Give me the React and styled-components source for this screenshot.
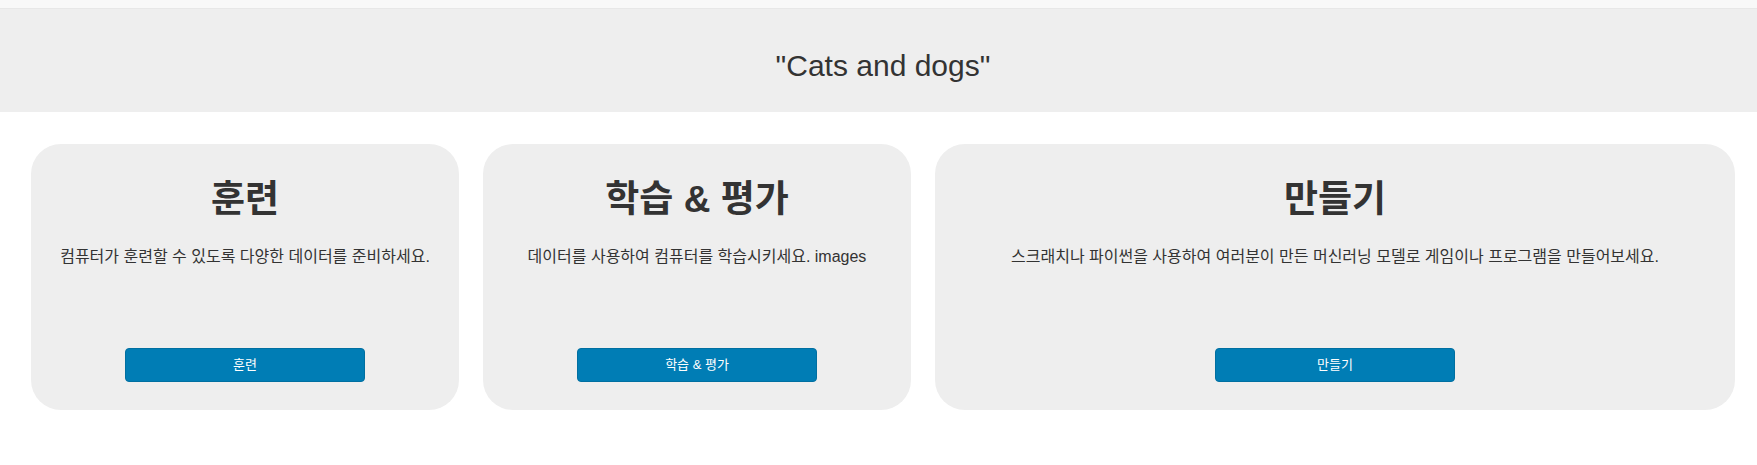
import React from 'react';
import styled, { createGlobalStyle } from 'styled-components';

const Global = createGlobalStyle`
  * { box-sizing: border-box; }
  body {
    margin: 0;
    background: #fff;
    color: #333;
    font-family: "Liberation Sans", "Noto Sans CJK KR", sans-serif;
    font-size: 16px;
    line-height: 24px;
  }
`;

const TopBar = styled.div`
  height: 9px;
  background: #f8f8f8;
  border-bottom: 1px solid #e7e7e7;
`;

const Banner = styled.header`
  padding: 41px 22px 30px 31px;
  background: #eee;
  text-align: center;
`;

const ProjectName = styled.h1`
  margin: 0;
  font-size: 30px;
  line-height: 32px;
  font-weight: 400;
`;

const Cards = styled.main`
  display: grid;
  grid-template-columns: 428fr 428fr 800fr;
  gap: 24px;
  padding: 32px 22px 32px 31px;
`;

const Card = styled.section`
  display: flex;
  flex-direction: column;
  align-items: center;
  min-height: 266px;
  padding: 32px 16px 28px;
  border-radius: 30px;
  background: #eee;
  text-align: center;
`;

const CardTitle = styled.h2`
  margin: 0 0 21px;
  font-size: 37px;
  line-height: 48px;
  font-weight: 700;
`;

const CardText = styled.p`
  margin: 0;
`;

const ActionButton = styled.button`
  width: 240px;
  max-width: 100%;
  height: 34px;
  margin-top: auto;
  padding: 0 12px;
  border: 1px solid #006fa1;
  border-radius: 4px;
  background: #007db5;
  color: #fff;
  font: inherit;
  font-size: 13px;
  cursor: pointer;
`;

const steps = [
  { title: '훈련', text: '컴퓨터가 훈련할 수 있도록 다양한 데이터를 준비하세요.' },
  { title: '학습 & 평가', text: '데이터를 사용하여 컴퓨터를 학습시키세요. images' },
  { title: '만들기', text: '스크래치나 파이썬을 사용하여 여러분이 만든 머신러닝 모델로 게임이나 프로그램을 만들어보세요.' },
];

export default function App() {
  return (
    <>
      <Global />
      <TopBar />
      <Banner>
        <ProjectName>"Cats and dogs"</ProjectName>
      </Banner>
      <Cards>
        {steps.map(({ title, text }) => (
          <Card key={title}>
            <CardTitle>{title}</CardTitle>
            <CardText>{text}</CardText>
            <ActionButton type="button">{title}</ActionButton>
          </Card>
        ))}
      </Cards>
    </>
  );
}
